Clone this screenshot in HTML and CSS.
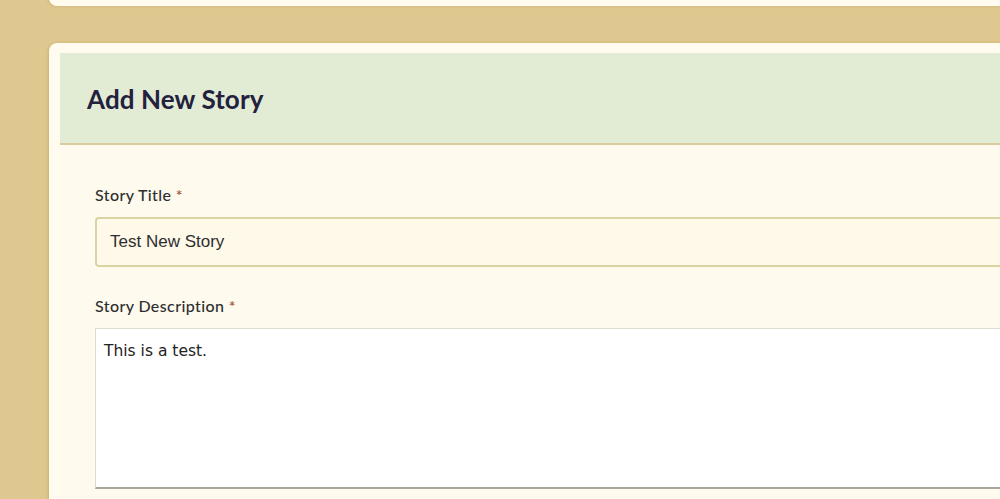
FILE: index.html
```html
<!DOCTYPE html>
<html>
<head>
<meta charset="utf-8">
<link rel="stylesheet" href="styles.css">
</head>
<body>
<div class="page">
  <div class="card card-top"></div>
  <div class="card card-main">
    <div class="card-header">
      <h2 class="card-title">Add New Story</h2>
    </div>
    <div class="card-body">
      <div class="field">
        <label class="label">Story Title <span class="req">*</span></label>
        <div class="input">Test New Story</div>
      </div>
      <div class="field">
        <label class="label">Story Description <span class="req">*</span></label>
        <div class="textarea">This is a test.</div>
      </div>
    </div>
  </div>
</div>
</body>
</html>
```
FILE: styles.css
```css
html, body {
  margin: 0;
  padding: 0;
  background: #dfc88f;
  overflow: hidden;
}
.page {
  padding-left: 49px;
  width: 1100px;
}
.card {
  background: #fffbef;
  border-radius: 8px;
  box-shadow: -1px 0 3px rgba(140, 110, 40, 0.25);
}
.card-top {
  height: 46px;
  margin-top: -40px;
}
.card-main {
  margin-top: 37px;
  padding: 10px 0 0 11px;
}
.card-header {
  background: #e2ecd5;
  height: 90px;
  border-bottom: 2px solid #ddcba0;
  display: flex;
  align-items: center;
  padding-left: 27px;
}
.card-title {
  margin: 0;
  font-family: Lato, "Open Sans", sans-serif;
  font-weight: 700;
  font-size: 26px;
  letter-spacing: 0.1px;
  color: #23213d;
  padding-top: 1px;
}
.card-body {
  background: #fffaee;
  padding: 40px 0 20px 35px;
}
.field {
  display: flex;
  flex-direction: column;
}
.field + .field {
  margin-top: 29px;
}
.label {
  font-family: Lato, "Open Sans", sans-serif;
  font-size: 16px;
  font-weight: 500;
  letter-spacing: 0.4px;
  color: #2e2e2e;
  line-height: 20px;
  margin-bottom: 12px;
}
.req {
  color: #a0503c;
}
.input {
  height: 46px;
  border: 2px solid #dcd3a2;
  border-radius: 4px;
  background: #fff9ea;
  font-family: "Liberation Sans", Arial, sans-serif;
  font-size: 17px;
  color: #2e2e2e;
  display: flex;
  align-items: center;
  padding-left: 13px;
}
.textarea {
  background: #ffffff;
  border: 1px solid #dedbd2;
  border-bottom: 2px solid #aaa69c;
  font-family: "DejaVu Sans", Verdana, sans-serif;
  font-size: 15.5px;
  color: #222;
  padding: 13px 8px;
  box-sizing: border-box;
  height: 161px;
}
```
